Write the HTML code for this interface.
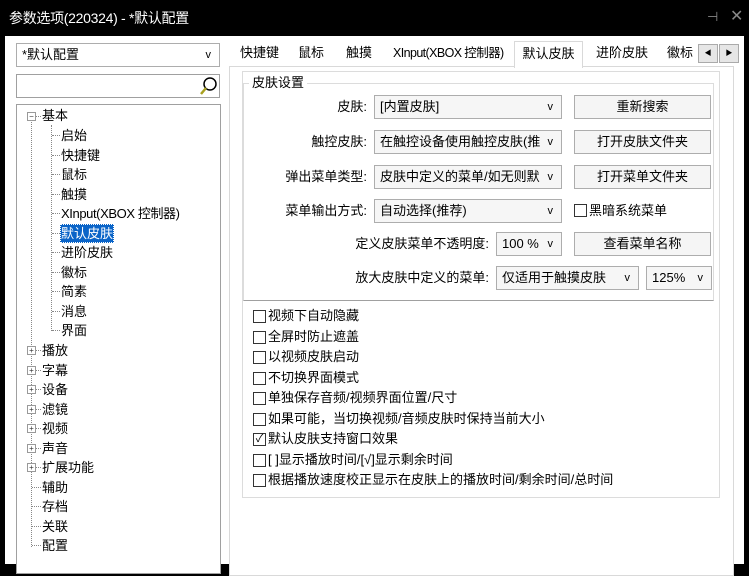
<!DOCTYPE html>
<html><head><meta charset="utf-8">
<style>
*{margin:0;padding:0;box-sizing:border-box}
body{width:749px;height:564px;background:#000;position:relative;overflow:hidden;font-family:"Liberation Sans","Noto Sans CJK SC","Microsoft YaHei",sans-serif;font-size:13px;color:#000}
.a{position:absolute}
.win{left:5px;top:36px;width:739px;height:528px;background:#fff}
.title{left:9px;top:7px;color:#fff;font-size:14px;line-height:22px;letter-spacing:-0.3px}
.box{border:1px solid #a0a0a0;background:#fff}
.cb{border:1px solid #adadad;background:#f6f6f6;line-height:22px;padding-left:5px;white-space:nowrap;overflow:hidden}
.cb .v{position:absolute;right:8px;top:0;font-size:11px}
.btn{border:1px solid #adadad;background:#f5f5f5;text-align:center;line-height:22px}
.lbl{text-align:right;line-height:24px;white-space:nowrap}
.tab{top:43px;line-height:20px;white-space:nowrap}
.chk{width:13px;height:13px;border:1px solid #333;background:#fff}
.ti{line-height:19px;white-space:nowrap}
.dv{border-left:1px dotted #888;width:0}
.dh{border-top:1px dotted #888;height:0}
.pm{width:9px;height:9px;border:1px solid #999;background:#fff;font-size:8px;line-height:7px;text-align:center;color:#333}
</style></head><body>
<div class="a title">参数选项(220324) - *默认配置</div>
<div class="a" style="left:707px;top:9px;color:#888;font-size:13px">⊣</div>
<div class="a" style="left:730px;top:6px;color:#888;font-size:16px">✕</div>
<div class="a win"></div>

<!-- left -->
<div class="a cb" style="left:16px;top:43px;width:204px;height:24px;background:#fff">*默认配置<span class="v">v</span></div>
<div class="a box" style="left:16px;top:74px;width:204px;height:24px"></div>
<svg class="a" style="left:198px;top:76px" width="20" height="20"><circle cx="12" cy="8" r="6" fill="none" stroke="#000" stroke-width="1.5"/><line x1="8" y1="12" x2="3" y2="18" stroke="#a8a020" stroke-width="2.5"/></svg>
<div class="a box" style="left:16px;top:104px;width:205px;height:470px"></div>

<div class="a dv" style="left:31px;top:122px;height:425px"></div>
<div class="a dv" style="left:51px;top:125px;height:206px"></div>
<div class="a pm" style="left:27px;top:112px">−</div>
<div class="a dh" style="left:36px;top:116px;width:5px"></div>
<div class="a ti" style="left:42px;top:106px">基本</div>
<div class="a" style="left:0;top:126px;width:220px">
<div class="a dh" style="left:52px;top:9px;width:8px"></div><div class="a ti" style="left:61px;top:0">启始</div>
<div class="a dh" style="left:52px;top:29px;width:8px"></div><div class="a ti" style="left:61px;top:19.5px">快捷键</div>
<div class="a dh" style="left:52px;top:48px;width:8px"></div><div class="a ti" style="left:61px;top:39px">鼠标</div>
<div class="a dh" style="left:52px;top:68px;width:8px"></div><div class="a ti" style="left:61px;top:58.5px">触摸</div>
<div class="a dh" style="left:52px;top:87px;width:8px"></div><div class="a ti" style="left:61px;top:78px;letter-spacing:-0.4px">XInput(XBOX 控制器)</div>
<div class="a dh" style="left:52px;top:107px;width:8px"></div><div class="a ti" style="left:60px;top:97.5px;background:#0a64c8;color:#fff;padding:0 1px;outline:1px dotted #fff;outline-offset:-1px">默认皮肤</div>
<div class="a dh" style="left:52px;top:126px;width:8px"></div><div class="a ti" style="left:61px;top:117px">进阶皮肤</div>
<div class="a dh" style="left:52px;top:146px;width:8px"></div><div class="a ti" style="left:61px;top:136.5px">徽标</div>
<div class="a dh" style="left:52px;top:165px;width:8px"></div><div class="a ti" style="left:61px;top:156px">简素</div>
<div class="a dh" style="left:52px;top:185px;width:8px"></div><div class="a ti" style="left:61px;top:175.5px">消息</div>
<div class="a dh" style="left:52px;top:204px;width:8px"></div><div class="a ti" style="left:61px;top:195px">界面</div>
</div>
<div class="a" style="left:0;top:341px;width:220px">
<div class="a pm" style="left:27px;top:5px">+</div><div class="a dh" style="left:36px;top:9px;width:5px"></div><div class="a ti" style="left:42px;top:0">播放</div>
<div class="a pm" style="left:27px;top:24.5px">+</div><div class="a dh" style="left:36px;top:29px;width:5px"></div><div class="a ti" style="left:42px;top:19.5px">字幕</div>
<div class="a pm" style="left:27px;top:44px">+</div><div class="a dh" style="left:36px;top:48px;width:5px"></div><div class="a ti" style="left:42px;top:39px">设备</div>
<div class="a pm" style="left:27px;top:63.5px">+</div><div class="a dh" style="left:36px;top:68px;width:5px"></div><div class="a ti" style="left:42px;top:58.5px">滤镜</div>
<div class="a pm" style="left:27px;top:83px">+</div><div class="a dh" style="left:36px;top:87px;width:5px"></div><div class="a ti" style="left:42px;top:78px">视频</div>
<div class="a pm" style="left:27px;top:102.5px">+</div><div class="a dh" style="left:36px;top:107px;width:5px"></div><div class="a ti" style="left:42px;top:97.5px">声音</div>
<div class="a pm" style="left:27px;top:122px">+</div><div class="a dh" style="left:36px;top:126px;width:5px"></div><div class="a ti" style="left:42px;top:117px">扩展功能</div>
<div class="a dh" style="left:32px;top:146px;width:9px"></div><div class="a ti" style="left:42px;top:136.5px">辅助</div>
<div class="a dh" style="left:32px;top:165px;width:9px"></div><div class="a ti" style="left:42px;top:156px">存档</div>
<div class="a dh" style="left:32px;top:185px;width:9px"></div><div class="a ti" style="left:42px;top:175.5px">关联</div>
<div class="a dh" style="left:32px;top:204px;width:9px"></div><div class="a ti" style="left:42px;top:195px">配置</div>
</div>

<!-- tabs -->
<div class="a box" style="left:229px;top:66px;width:505px;height:510px;border-color:#d9d9d9"></div>
<div class="a tab" style="left:240px">快捷键</div>
<div class="a tab" style="left:298px">鼠标</div>
<div class="a tab" style="left:346px">触摸</div>
<div class="a tab" style="left:393px;letter-spacing:-0.6px;font-size:12.5px">XInput(XBOX 控制器)</div>
<div class="a" style="left:514px;top:41px;width:69px;height:27px;border:1px solid #d9d9d9;border-bottom:none;background:#fff;text-align:center;line-height:24px">默认皮肤</div>
<div class="a tab" style="left:596px">进阶皮肤</div>
<div class="a tab" style="left:667px">徽标</div>
<div class="a" style="left:698px;top:44px;width:20px;height:19px;border:1px solid #aaa;background:#e6e6e6;font-size:7px;line-height:17px;text-align:center">◀</div>
<div class="a" style="left:719px;top:44px;width:20px;height:19px;border:1px solid #aaa;background:#e6e6e6;font-size:7px;line-height:17px;text-align:center">▶</div>

<!-- inner -->
<div class="a box" style="left:242px;top:71px;width:478px;height:427px;border-color:#dcdcdc"></div>
<div class="a" style="left:243px;top:83px;width:471px;height:218px;border:1px solid #dcdcdc;border-bottom:1px solid #a0a0a0"></div>
<div class="a" style="left:249px;top:74px;background:#fff;padding:0 3px;line-height:18px">皮肤设置</div>

<div class="a lbl" style="left:250px;top:95px;width:117px">皮肤:</div>
<div class="a cb" style="left:374px;top:95px;width:188px;height:24px">[内置皮肤]<span class="v">v</span></div>
<div class="a btn" style="left:574px;top:95px;width:137px;height:24px">重新搜索</div>

<div class="a lbl" style="left:250px;top:130px;width:117px">触控皮肤:</div>
<div class="a cb" style="left:374px;top:130px;width:188px;height:24px;padding-right:20px">在触控设备使用触控皮肤(推<span class="v">v</span></div>
<div class="a btn" style="left:574px;top:130px;width:137px;height:24px">打开皮肤文件夹</div>

<div class="a lbl" style="left:250px;top:165px;width:117px">弹出菜单类型:</div>
<div class="a cb" style="left:374px;top:165px;width:188px;height:24px;padding-right:20px">皮肤中定义的菜单/如无则默<span class="v">v</span></div>
<div class="a btn" style="left:574px;top:165px;width:137px;height:24px">打开菜单文件夹</div>

<div class="a lbl" style="left:250px;top:199px;width:117px">菜单输出方式:</div>
<div class="a cb" style="left:374px;top:199px;width:188px;height:24px">自动选择(推荐)<span class="v">v</span></div>
<div class="a chk" style="left:574px;top:204px"></div>
<div class="a" style="left:589px;top:199px;line-height:24px">黑暗系统菜单</div>

<div class="a lbl" style="left:300px;top:232px;width:189px">定义皮肤菜单不透明度:</div>
<div class="a cb" style="left:496px;top:232px;width:66px;height:24px">100 %<span class="v">v</span></div>
<div class="a btn" style="left:574px;top:232px;width:137px;height:24px">查看菜单名称</div>

<div class="a lbl" style="left:300px;top:266px;width:189px">放大皮肤中定义的菜单:</div>
<div class="a cb" style="left:496px;top:266px;width:143px;height:24px">仅适用于触摸皮肤<span class="v">v</span></div>
<div class="a cb" style="left:646px;top:266px;width:66px;height:24px">125%<span class="v">v</span></div>

<div class="a" style="left:253px;top:306px">
<div class="a chk" style="left:0;top:4px"></div><div class="a ti" style="left:15px;top:0">视频下自动隐藏</div>
<div class="a chk" style="left:0;top:24.5px"></div><div class="a ti" style="left:15px;top:20.5px">全屏时防止遮盖</div>
<div class="a chk" style="left:0;top:45px"></div><div class="a ti" style="left:15px;top:41px">以视频皮肤启动</div>
<div class="a chk" style="left:0;top:65.5px"></div><div class="a ti" style="left:15px;top:61.5px">不切换界面模式</div>
<div class="a chk" style="left:0;top:86px"></div><div class="a ti" style="left:15px;top:82px">单独保存音频/视频界面位置/尺寸</div>
<div class="a chk" style="left:0;top:106.5px"></div><div class="a ti" style="left:15px;top:102.5px">如果可能，当切换视频/音频皮肤时保持当前大小</div>
<div class="a chk" style="left:0;top:127px;font-size:11px;line-height:11px;text-align:center">✓</div><div class="a ti" style="left:15px;top:123px">默认皮肤支持窗口效果</div>
<div class="a chk" style="left:0;top:147.5px"></div><div class="a ti" style="left:15px;top:143.5px">[ ]显示播放时间/[√]显示剩余时间</div>
<div class="a chk" style="left:0;top:168px"></div><div class="a ti" style="left:15px;top:164px">根据播放速度校正显示在皮肤上的播放时间/剩余时间/总时间</div>
</div>
</body></html>
